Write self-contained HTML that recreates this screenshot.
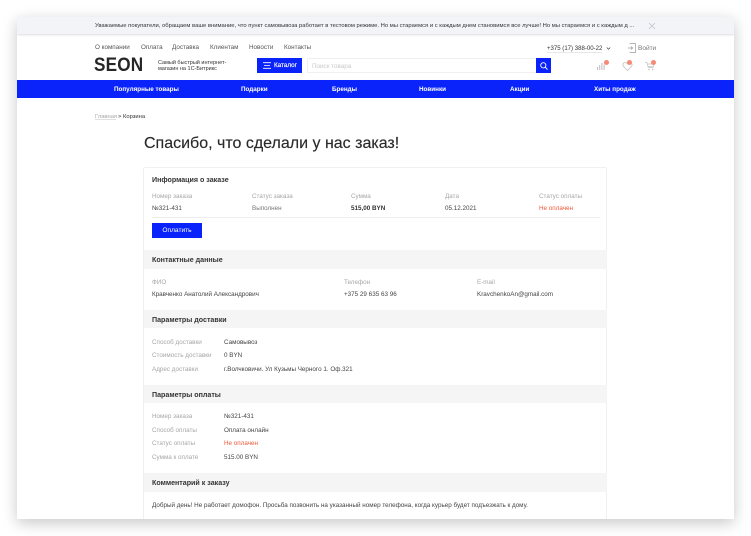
<!DOCTYPE html>
<html lang="ru"><head><meta charset="utf-8"><title>Заказ</title>
<style>
html,body{margin:0;padding:0;background:#fff;width:751px;height:536px;overflow:hidden}
body{font-family:"Liberation Sans",sans-serif;position:relative}
#w{position:absolute;left:17px;top:17px;width:717px;height:502px;background:#fff;box-shadow:0 4px 14px rgba(0,0,0,.22);overflow:hidden}
#c{position:absolute;left:-17px;top:-17px;width:751px;height:536px;filter:blur(.3px)}
.t{position:absolute;white-space:nowrap;line-height:10px;font-size:6.3px;color:#444}
.g{color:#a6a6a6}.d{color:#333}.r{color:#f0583a}
.b{font-weight:bold;color:#333;font-size:7.1px}
.n{color:#fff;font-weight:bold;font-size:6.3px}
.s{position:absolute;left:144px;width:463px;height:18px;background:#f5f5f5}
.l{position:absolute;background:#eee}
.dot{position:absolute;width:5px;height:5px;border-radius:50%;background:#f58a75}
svg{position:absolute;overflow:visible}
</style></head><body>
<div id="w"><div id="c">
<div style="position:absolute;left:17px;top:17px;width:717px;height:17px;background:#f2f4f8;box-shadow:0 1px 2px rgba(0,0,0,.14)"></div>
<div class="t d" style="left:95px;top:21px;font-size:5.85px;line-height:11px">Уважаемые покупатели, обращаем ваше внимание, что пункт самовывоза работает в тестовом режиме. Но мы стараемся и с каждым днем становимся все лучше! Но мы стараемся и с каждым д ...</div>
<svg style="left:649px;top:22.5px" width="6" height="6" viewBox="0 0 6 6"><path d="M0 0L6 6M6 0L0 6" stroke="#c0c4ca" stroke-width=".8"/></svg>

<div class="t" style="left:95px;top:42px;color:#555;line-height:11px">О компании</div>
<div class="t" style="left:141px;top:42px;color:#555;line-height:11px">Оплата</div>
<div class="t" style="left:172px;top:42px;color:#555;line-height:11px">Доставка</div>
<div class="t" style="left:210px;top:42px;color:#555;line-height:11px">Клиентам</div>
<div class="t" style="left:249px;top:42px;color:#555;line-height:11px">Новости</div>
<div class="t" style="left:284px;top:42px;color:#555;line-height:11px">Контакты</div>
<div class="t" style="left:547px;top:44px;font-size:6.05px;color:#333">+375 (17) 388-00-22</div>
<div class="l" style="left:547px;top:52px;width:55px;height:1px;background:#e8e8e8"></div>
<svg style="left:606px;top:46.5px" width="5" height="3" viewBox="0 0 6 4"><path d="M.7.7L3 3l2.300-2.300" fill="none" stroke="#444" stroke-width=".9"/></svg>
<svg style="left:628px;top:43px" width="9" height="10" viewBox="0 0 9 10"><path d="M1.500 0.500H7.500V9.500H1.500M0 5H4.500M3 3.500L4.700 5 3 6.500" fill="none" stroke="#9a9a9a" stroke-width=".7"/></svg>
<div class="t" style="left:638px;top:44px;font-size:6.5px;color:#777">Войти</div>

<div class="t" style="left:94px;top:54px;font-size:19.5px;line-height:22px;font-weight:bold;color:#262626;letter-spacing:.2px;transform:scaleX(.88);transform-origin:0 0">SEON</div>
<div class="t d" style="left:158px;top:59.5px;line-height:6px;font-size:5.5px;white-space:normal;width:80px">Самый быстрый интернет-<br>магазин на 1С-Битрикс</div>
<div style="position:absolute;left:257px;top:58px;width:45px;height:15px;background:#0a23fb"></div>
<svg style="left:263px;top:62px" width="8" height="7" viewBox="0 0 8 7"><path d="M0 .7H8M1 3.500H7M0 6.300H8" stroke="#fff" stroke-width=".8" fill="none"/></svg>
<div class="t n" style="left:274px;top:61px;font-weight:normal;-webkit-text-stroke:.15px #fff">Каталог</div>
<div style="position:absolute;left:307px;top:58px;width:229px;height:13px;border:1px solid #f0f0f0;background:#fff"></div>
<div class="t" style="left:312px;top:62px;color:#c8c8c8">Поиск товара</div>
<div style="position:absolute;left:536px;top:58px;width:15px;height:15px;background:#0a23fb"></div>
<svg style="left:540px;top:61.5px" width="8" height="8" viewBox="0 0 8 8"><circle cx="3.300" cy="3.300" r="2.600" fill="none" stroke="#fff" stroke-width=".9"/><path d="M5.200 5.200L7.500 7.500" stroke="#fff" stroke-width=".9"/></svg>

<svg style="left:597px;top:61px" width="10" height="9" viewBox="0 0 10 9"><path d="M.5 9V6M2.700 9V4M4.900 9V2M7.100 9V3.500" stroke="#c3c3c3" stroke-width="1.100" fill="none"/></svg>
<div class="dot" style="left:604px;top:60px"></div>
<svg style="left:622px;top:62px" width="11" height="9" viewBox="0 0 10 9"><path d="M5 8.500L1 4.500C-.5 2.500 1 .5 2.700.5 3.800.5 4.500 1.200 5 2 5.500 1.200 6.200.5 7.300.5 9 .5 10.500 2.500 9 4.500Z" fill="none" stroke="#c3c3c3" stroke-width=".8"/></svg>
<div class="dot" style="left:627px;top:60px"></div>
<svg style="left:645px;top:61.5px" width="10" height="9" viewBox="0 0 10 9"><path d="M0 .5H2L3.200 5.500H8.500M2.400 2H9L8.300 4.500H3" fill="none" stroke="#c3c3c3" stroke-width=".7"/><circle cx="4" cy="7.500" r=".8" fill="#c3c3c3"/><circle cx="7.700" cy="7.500" r=".8" fill="#c3c3c3"/></svg>
<div class="dot" style="left:651px;top:60px"></div>

<div style="position:absolute;left:17px;top:80px;width:717px;height:18px;background:#0a23fb"></div>
<div class="t n" style="left:114px;top:85px">Популярные товары</div>
<div class="t n" style="left:241px;top:85px">Подарки</div>
<div class="t n" style="left:332px;top:85px">Бренды</div>
<div class="t n" style="left:419px;top:85px">Новинки</div>
<div class="t n" style="left:510px;top:85px">Акции</div>
<div class="t n" style="left:594px;top:85px">Хиты продаж</div>

<div class="t g" style="left:95px;top:112px;font-size:5.8px">Главная</div>
<div class="l" style="left:95px;top:119px;width:21px;height:1px;background:#e0e0e0"></div>
<div class="t d" style="left:118px;top:112px;font-size:5.8px">&gt; Корзина</div>

<div class="t" style="left:144px;top:133px;font-size:16px;line-height:22px;color:#2a2a2a;-webkit-text-stroke:.15px #2a2a2a">Спасибо, что сделали у нас заказ!</div>

<div style="position:absolute;left:143px;top:167px;width:464px;height:360px;border:1px solid #f0f0f0;box-sizing:border-box;border-radius:2px"></div>

<div class="t b" style="left:152px;top:175px">Информация о заказе</div>
<div class="t g" style="left:152px;top:192px">Номер заказа</div>
<div class="t g" style="left:252px;top:192px">Статус заказа</div>
<div class="t g" style="left:351px;top:192px">Сумма</div>
<div class="t g" style="left:445px;top:192px">Дата</div>
<div class="t g" style="left:539px;top:192px">Статус оплаты</div>
<div class="t" style="left:152px;top:204px">№321-431</div>
<div class="t" style="left:252px;top:204px;color:#777">Выполнен</div>
<div class="t" style="left:351px;top:204px;font-weight:bold;color:#333">515,00 BYN</div>
<div class="t" style="left:445px;top:204px">05.12.2021</div>
<div class="t r" style="left:539px;top:204px">Не оплачен</div>
<div class="l" style="left:152px;top:217px;width:448px;height:1px"></div>
<div style="position:absolute;left:152px;top:223px;width:50px;height:15px;background:#0a23fb;color:#fff;font-size:6.6px;line-height:15px;text-align:center">Оплатить</div>

<div class="s" style="top:250px;height:19px"></div>
<div class="t b" style="left:152px;top:255px">Контактные данные</div>
<div class="t g" style="left:152px;top:278px">ФИО</div>
<div class="t g" style="left:344px;top:278px">Телефон</div>
<div class="t g" style="left:477px;top:278px">E-mail</div>
<div class="t" style="left:152px;top:290px">Кравченко Анатолий Александрович</div>
<div class="t" style="left:344px;top:290px">+375 29 635 63 96</div>
<div class="t" style="left:477px;top:290px">KravchenkoAn@gmail.com</div>

<div class="s" style="top:310px"></div>
<div class="t b" style="left:152px;top:315px">Параметры доставки</div>
<div class="t g" style="left:152px;top:338px">Способ доставки</div>
<div class="t g" style="left:152px;top:351px">Стоимость доставки</div>
<div class="t g" style="left:152px;top:365px">Адрес доставки</div>
<div class="t" style="left:224px;top:338px">Самовывоз</div>
<div class="t" style="left:224px;top:351px">0 BYN</div>
<div class="t" style="left:224px;top:365px">г.Волчковичи. Ул Кузьмы Черного 1. Оф.321</div>

<div class="s" style="top:385px"></div>
<div class="t b" style="left:152px;top:390px">Параметры оплаты</div>
<div class="t g" style="left:152px;top:412px">Номер заказа</div>
<div class="t g" style="left:152px;top:426px">Способ оплаты</div>
<div class="t g" style="left:152px;top:439px">Статус оплаты</div>
<div class="t g" style="left:152px;top:453px">Сумма к оплате</div>
<div class="t" style="left:224px;top:412px">№321-431</div>
<div class="t" style="left:224px;top:426px">Оплата онлайн</div>
<div class="t r" style="left:224px;top:439px">Не оплачен</div>
<div class="t" style="left:224px;top:453px">515.00 BYN</div>

<div class="s" style="top:473px;height:19px"></div>
<div class="t b" style="left:152px;top:478px">Комментарий к заказу</div>
<div class="t" style="left:152px;top:501px">Добрый день! Не работает домофон. Просьба позвонить на указанный номер телефона, когда курьер будет подъезжать к дому.</div>
</div></div>
</body></html>
